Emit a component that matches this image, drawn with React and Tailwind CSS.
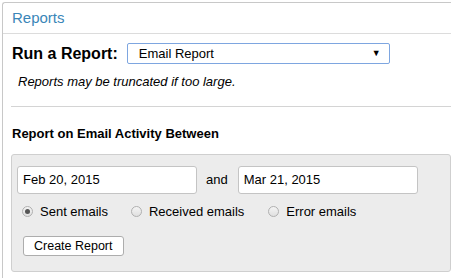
export default function App() {
  return (
    <div className="w-[451px] h-[278px] bg-white overflow-hidden pt-[2px] pl-[2px] font-['Liberation_Sans',Arial,sans-serif] text-[#222]">
      <div className="h-[300px] border-l border-t border-[#c8c8c8] rounded-tl-[3px]">
        <div className="h-[31px] pl-[9px] pt-[6px] text-[15px] text-[#3a86b8] border-b border-[#dcdcdc] leading-[17px]">
          Reports
        </div>
        <div className="flex items-center pl-[9px] pt-[9px]">
          <span className="text-[16px] font-bold text-black leading-[18px]">Run a Report:</span>
          <div className="ml-[9px] w-[263px] h-[21px] border border-[#7ea6e0] rounded-[2px] flex items-center justify-between pl-[11px] pr-[8px] text-[13px] text-black">
            <span>Email Report</span>
            <span className="text-[9px]">▼</span>
          </div>
        </div>
        <div className="pl-[15px] pt-[10px] text-[13px] italic text-black leading-[16px]">
          Reports may be truncated if too large.
        </div>
        <div className="ml-[8px] mt-[16px] border-t border-[#d4d4d4]"></div>
        <div className="pl-[9px] pt-[19px] text-[13px] font-bold text-black leading-[15px]">
          Report on Email Activity Between
        </div>
        <div className="ml-[8px] mt-[13px] h-[118px] bg-[#ececec] border border-[#cfcfcf] rounded-[3px] pl-[5px] pt-[11px]">
          <div className="flex items-center">
            <div className="w-[180px] h-[28px] bg-white border border-[#c4c4c4] rounded-[3px] pl-[5px] flex items-center text-[13px] text-black">
              Feb 20, 2015
            </div>
            <span className="ml-[9px] text-[13px] text-black">and</span>
            <div className="ml-[10px] w-[180px] h-[28px] bg-white border border-[#c4c4c4] rounded-[3px] pl-[5px] flex items-center text-[13px] text-black">
              Mar 21, 2015
            </div>
          </div>
          <div className="flex items-center mt-[8px] pl-[5px] text-[13px] text-black">
            <Radio checked />
            <span className="ml-[7px]">Sent emails</span>
            <span className="ml-[23px] flex"><Radio /></span>
            <span className="ml-[7px]">Received emails</span>
            <span className="ml-[24px] flex"><Radio /></span>
            <span className="ml-[7px]">Error emails</span>
          </div>
          <button className="mt-[14px] ml-[6px] h-[20px] px-[10px] bg-white border border-[#adadad] rounded-[3px] text-[12.5px] text-black leading-[18px]">
            Create Report
          </button>
        </div>
      </div>
    </div>
  );
}

function Radio({ checked }) {
  return (
    <span className="inline-flex w-[11px] h-[11px] rounded-full border border-[#b0b0b0] bg-gradient-to-b from-[#f4f4f4] to-[#e0e0e0] items-center justify-center">
      {checked && <span className="w-[5px] h-[5px] rounded-full bg-[#555]"></span>}
    </span>
  );
}
